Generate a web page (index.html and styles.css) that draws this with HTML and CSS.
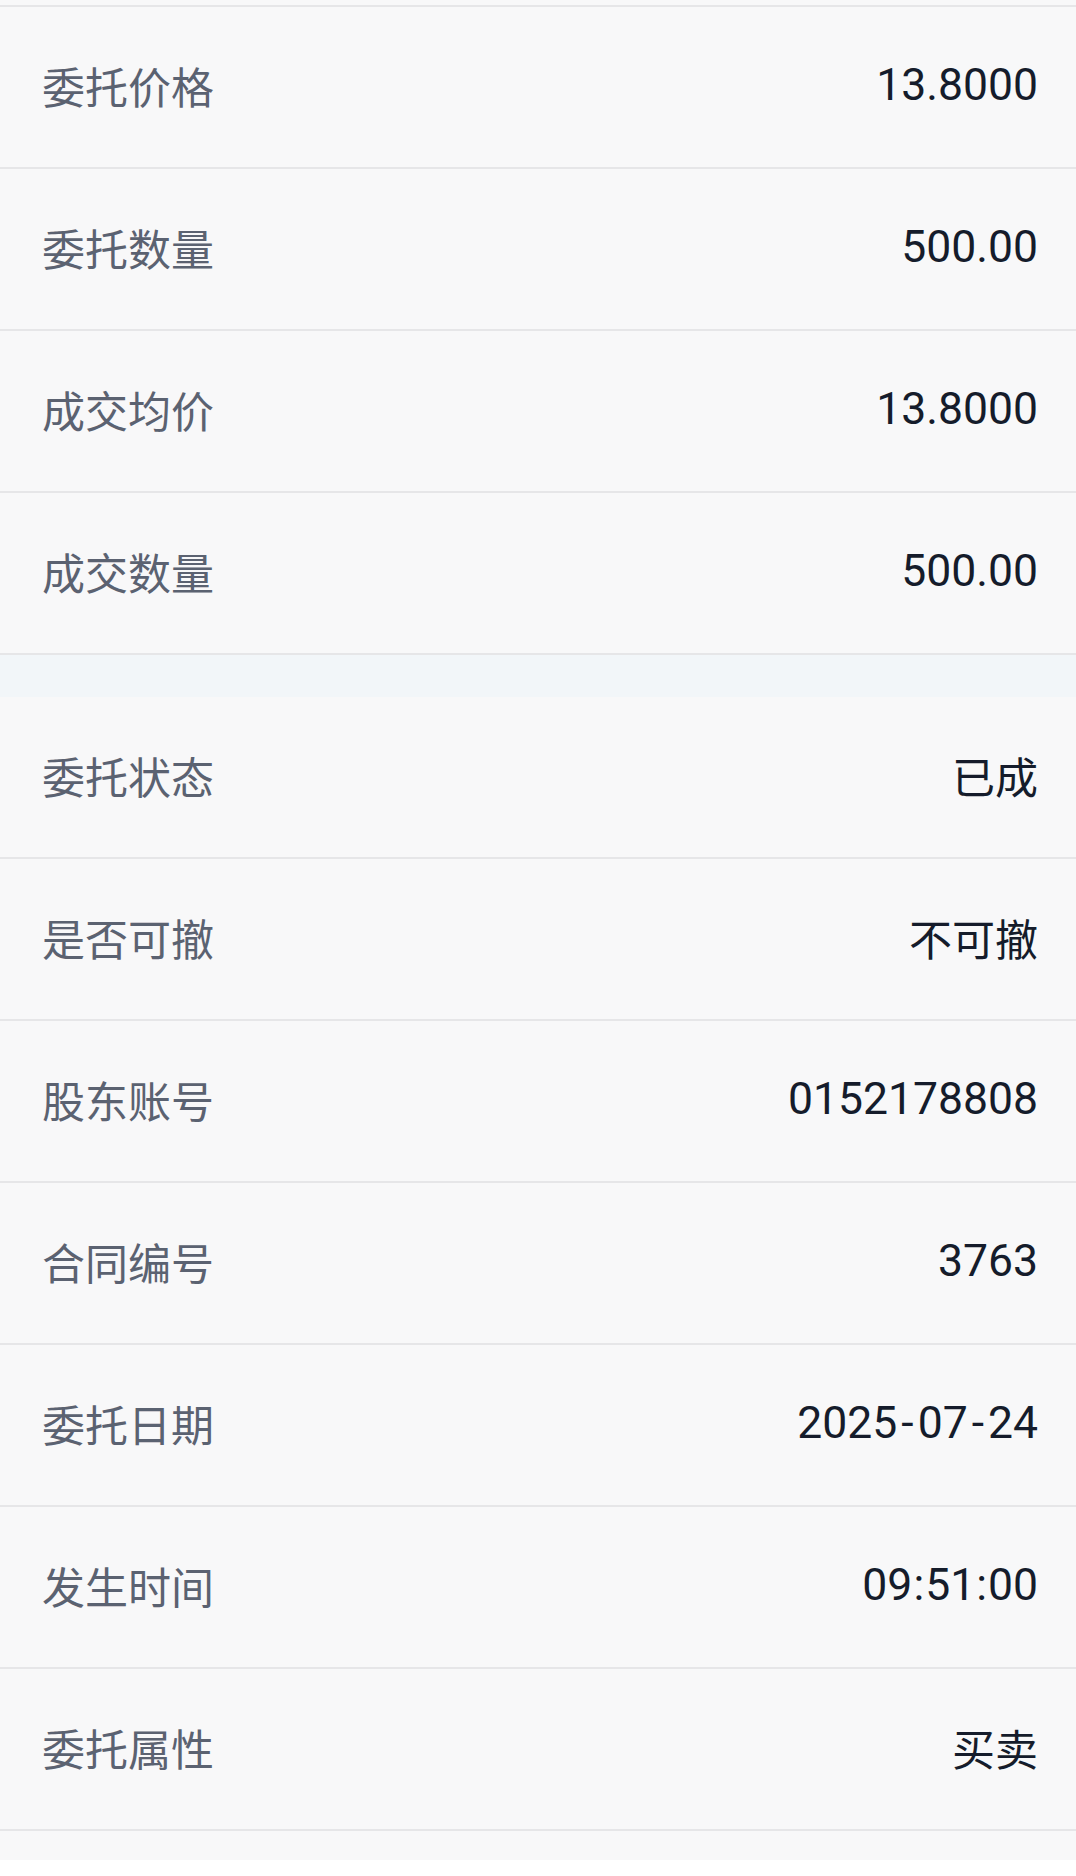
FILE: index.html
```html
<!DOCTYPE html>
<html lang="zh">
<head>
<meta charset="utf-8">
<link rel="stylesheet" href="styles.css">
</head>
<body>
<div class="page">
  <div class="group first">
    <div class="row"><span class="label">委托价格</span><span class="value">13.8000</span></div>
    <div class="row"><span class="label">委托数量</span><span class="value">500.00</span></div>
    <div class="row"><span class="label">成交均价</span><span class="value">13.8000</span></div>
    <div class="row"><span class="label">成交数量</span><span class="value">500.00</span></div>
  </div>
  <div class="spacer"></div>
  <div class="group">
    <div class="row"><span class="label">委托状态</span><span class="value cjk">已成</span></div>
    <div class="row"><span class="label">是否可撤</span><span class="value cjk">不可撤</span></div>
    <div class="row"><span class="label">股东账号</span><span class="value">0152178808</span></div>
    <div class="row"><span class="label">合同编号</span><span class="value">3763</span></div>
    <div class="row"><span class="label">委托日期</span><span class="value">2025<span class="dash">-</span>07<span class="dash">-</span>24</span></div>
    <div class="row"><span class="label">发生时间</span><span class="value">09<span class="colon">:</span>51<span class="colon">:</span>00</span></div>
    <div class="row"><span class="label">委托属性</span><span class="value cjk">买卖</span></div>
  </div>
  <div class="tail"></div>
</div>
</body>
</html>
```

FILE: styles.css
```css
html, body {
  margin: 0;
  padding: 0;
  background: #ffffff;
}
.page {
  width: 1076px;
  padding-top: 5px;
  background: #f8f8f9;
  font-family: Roboto, "Noto Sans CJK SC", sans-serif;
}
.group.first {
  border-top: 2px solid #e6e6e8;
}
.row {
  height: 156px;
  border-bottom: 2px solid #e6e6e8;
  display: flex;
  align-items: center;
  justify-content: space-between;
  padding: 0 38px 4px 42px;
  background: #f8f8f9;
}
.label {
  font-family: "Noto Sans CJK SC", sans-serif;
  font-size: 43px;
  color: #5b6271;
}
.value {
  font-family: Roboto, "Noto Sans CJK SC", sans-serif;
  font-size: 44.5px;
  color: #151c2b;
}
.value.cjk {
  font-family: "Noto Sans CJK SC", sans-serif;
  font-size: 43px;
}
.dash {
  margin: 0 4px;
}
.colon {
  margin: 0 1px;
}
.spacer {
  height: 42px;
  background: #f2f6f9;
}
.tail {
  height: 29px;
  background: #f8f8f9;
}
```
